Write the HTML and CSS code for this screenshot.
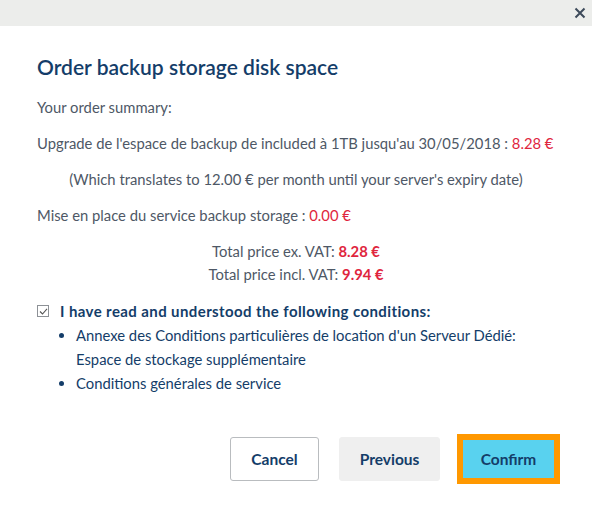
FILE: index.html
```html
<!DOCTYPE html>
<html lang="en">
<head>
<meta charset="utf-8">
<title>Order backup storage disk space</title>
<link rel="stylesheet" href="styles.css">
</head>
<body>
<div class="modal">
  <div class="modal-header">
    <button class="close" aria-label="Close">
      <svg width="12" height="12" viewBox="0 0 12 12"><path d="M1.5 1.5 L10.5 10.5 M10.5 1.5 L1.5 10.5" stroke="#3d4a5a" stroke-width="2" fill="none"/></svg>
    </button>
  </div>
  <div class="modal-body">
    <h1 class="title">Order backup storage disk space</h1>
    <p class="line">Your order summary:</p>
    <p class="line">Upgrade de l'espace de backup de included à 1TB jusqu'au 30/05/2018 : <span class="price">8.28 €</span></p>
    <p class="line center">(Which translates to 12.00 € per month until your server's expiry date)</p>
    <p class="line">Mise en place du service backup storage : <span class="price">0.00 €</span></p>
    <div class="totals">
      <div>Total price ex. VAT: <strong class="price">8.28 €</strong></div>
      <div>Total price incl. VAT: <strong class="price">9.94 €</strong></div>
    </div>
    <div class="conditions">
      <label class="check-row">
        <span class="checkbox"><svg width="9" height="9" viewBox="0 0 9 9"><path d="M1 4.5 L3.5 7 L8 1.8" stroke="#555" stroke-width="1.1" fill="none"/></svg></span>
        <span class="check-label">I have read and understood the following conditions:</span>
      </label>
      <ul class="cond-list">
        <li>Annexe des Conditions particulières de location d'un Serveur Dédié:<br>Espace de stockage supplémentaire</li>
        <li>Conditions générales de service</li>
      </ul>
    </div>
  </div>
  <div class="modal-footer">
    <button class="btn btn-cancel">Cancel</button>
    <button class="btn btn-prev">Previous</button>
    <button class="btn btn-confirm">Confirm</button>
  </div>
</div>
</body>
</html>
```

FILE: styles.css
```css
html, body {
  margin: 0;
  padding: 0;
  background: #fff;
}
body {
  font-family: Lato, "Open Sans", sans-serif;
  font-size: 14.8px;
  color: #4e5866;
}
.modal {
  width: 592px;
  height: 507px;
  display: flex;
  flex-direction: column;
}
.modal-header {
  height: 26px;
  background: #ecedeb;
  display: flex;
  justify-content: flex-end;
  align-items: center;
  padding-right: 6px;
}
.close {
  border: 0;
  background: transparent;
  padding: 0;
  width: 12px;
  height: 12px;
  display: flex;
}
.modal-body {
  padding: 28px 37px 0 37px;
}
.title {
  margin: 0 0 16px 0;
  font-size: 21px;
  line-height: 26px;
  font-weight: 600;
  color: #143d69;
}
.line {
  margin: 0 0 14px 0;
  line-height: 22px;
}
.center {
  text-align: center;
}
.price {
  color: #e0253d;
}
strong.price {
  font-weight: 700;
}
.totals {
  text-align: center;
  line-height: 23px;
  margin-top: 2px;
}
.conditions {
  margin-top: 13px;
  color: #143d69;
}
.check-row {
  display: flex;
  align-items: center;
  gap: 11px;
  line-height: 24px;
}
.checkbox {
  border: 1px solid #8d9196;
  display: flex;
  align-items: center;
  justify-content: center;
  box-sizing: border-box;
  width: 12px;
  height: 12px;
}
.check-label {
  font-weight: 700;
  font-size: 15px;
  letter-spacing: 0.4px;
}
.cond-list {
  margin: 0;
  padding: 0 0 0 39px;
  line-height: 24px;
}
.modal-footer {
  display: flex;
  justify-content: flex-end;
  gap: 20px;
  padding: 0 35px 0 0;
  margin-top: 42px;
}
.btn {
  font-family: inherit;
  font-size: 15.5px;
  font-weight: 700;
  color: #143d69;
  height: 44px;
  border-radius: 3px;
  box-sizing: border-box;
  cursor: pointer;
}
.btn-cancel {
  width: 89px;
  background: #fff;
  border: 1px solid #b9bcbf;
}
.btn-prev {
  width: 101px;
  background: #efefef;
  border: 1px solid #efefef;
}
.btn-confirm {
  width: 97px;
  background: #59d2ef;
  border: 3px solid #ff9800;
  border-radius: 0;
  box-shadow: 0 0 0 3px #ff9800;
}
```
